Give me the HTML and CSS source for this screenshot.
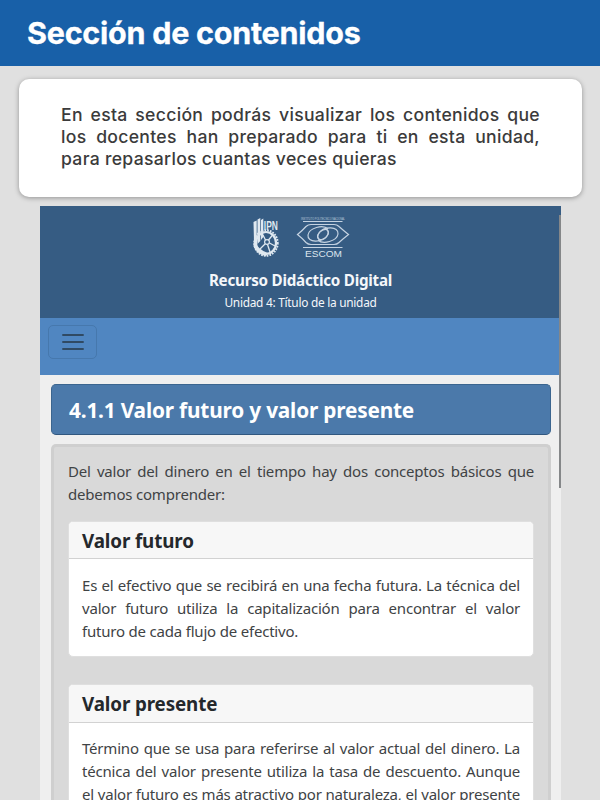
FILE: index.html
```html
<!DOCTYPE html>
<html lang="es">
<head>
<meta charset="utf-8">
<title>Sección de contenidos</title>
<link rel="stylesheet" href="styles.css">
</head>
<body>
<header class="topbar"><h1>Sección de contenidos</h1></header>
<section class="intro">
  <p class="lines"><span>En esta sección podrás visualizar los contenidos que</span> <span>los docentes han preparado para ti en esta unidad,</span> <span class="last">para repasarlos cuantas veces quieras</span></p>
</section>
<main class="resource">
  <header class="resource-head">
    <div class="logos">
      <svg class="ipn" width="28" height="42" viewBox="0 0 28 42">
        <g fill="none" stroke="#dfe8f0">
          <ellipse cx="14" cy="26" rx="11.800" ry="12.800" stroke-width="1.800" stroke-dasharray="1.700 1.100"/>
          <ellipse cx="14" cy="26" rx="10" ry="11" stroke-width="2.200"/>
          <circle cx="15" cy="25" r="2.400" stroke-width="1.200"/>
          <path d="M16.500 23L21 17.500M17.500 26L23 29M15.500 27.500L18 35M13 27L8 32M13.500 23L11 18" stroke-width="1.300"/>
        </g>
        <path d="M1.500 5L4.700 3.500V23L2 25ZM5.500 2.500L8.300 1V24L5.500 27ZM9 3L11.300 1.500V20L9 23Z" fill="#dfe8f0"/>
        <path d="M2 23Q6 33 16 36L14 39Q4 37 1.500 29Z" fill="#dfe8f0"/>
        <text x="11.800" y="12.500" class="ipn-text" textLength="14" lengthAdjust="spacingAndGlyphs">IPN</text>
      </svg>
      <svg class="escom" width="54" height="42" viewBox="0 0 54 42">
        <text x="5" y="3" class="institute" textLength="44" lengthAdjust="spacingAndGlyphs">INSTITUTO POLITECNICO NACIONAL</text>
        <g fill="none" stroke="#c5d3e2" stroke-width="1.200">
          <path d="M7 4.500H46.500M7 30.500H46.500"/>
          <path d="M1.500 17.500Q6 14 10 9.500Q12 7.500 15 7.500H38Q41 7.500 43 9.500Q48 14 52.500 17.500Q48 21 43 25.500Q41 27.500 38 27.500H15Q12 27.500 10 25.500Q6 21 1.500 17.500Z"/>
          <path d="M32 12C27 7 13 11 12 18C11 26 26 26 31 19C34 14 31 11 27 13C22 15 20 20 23 22"/>
          <path d="M22 23C27 28 41 24 42 17C43 9 28 9 23 16C20 21 23 24 27 22C32 20 34 15 31 13"/>
        </g>
        <text x="9" y="39.700" class="escom-text" textLength="37" lengthAdjust="spacingAndGlyphs">ESCOM</text>
      </svg>
    </div>
    <h2>Recurso Didáctico Digital</h2>
    <p>Unidad 4: Título de la unidad</p>
  </header>
  <nav class="resource-nav">
    <button class="menu" aria-label="Menú"><svg width="22" height="18" viewBox="0 0 22 18"><path d="M1 2H21M1 9H21M1 16H21" stroke="#304a63" stroke-width="1.900" stroke-linecap="round"/></svg></button>
  </nav>
  <div class="content">
    <h2 class="lesson"><span>4.1.1 Valor futuro y valor presente</span></h2>
    <section class="panel">
      <p class="lines copy"><span>Del valor del dinero en el tiempo hay dos conceptos básicos que</span> <span class="last">debemos comprender:</span></p>
      <article class="card">
        <h3>Valor futuro</h3>
        <p class="lines copy"><span>Es el efectivo que se recibirá en una fecha futura. La técnica del</span> <span>valor futuro utiliza la capitalización para encontrar el valor</span> <span class="last">futuro de cada flujo de efectivo.</span></p>
      </article>
      <article class="card">
        <h3>Valor presente</h3>
        <p class="lines copy"><span>Término que se usa para referirse al valor actual del dinero. La</span> <span>técnica del valor presente utiliza la tasa de descuento. Aunque</span> <span>el valor futuro es más atractivo por naturaleza, el valor presente</span></p>
      </article>
    </section>
  </div>
  <div class="scrollbar"></div>
</main>
</body>
</html>
```
FILE: styles.css
```css
* { box-sizing: border-box; }
body {
  margin: 0;
  height: 800px;
  overflow: hidden;
  background: #e0e0e0;
  font-family: "Noto Sans", sans-serif;
}
h1, h2, h3, p { margin: 0; }
.topbar {
  height: 66px;
  padding: 0 27px;
  display: flex;
  align-items: center;
  background: #1860a8;
}
.topbar h1 {
  font: 700 30.500px/40px Inter, sans-serif;
  letter-spacing: -.25px;
  color: #fff;
  -webkit-text-stroke: .3px #fff;
  white-space: nowrap;
}
.intro {
  width: 563px;
  height: 118px;
  margin: 13px 0 9px 19px;
  padding: 25px 42px;
  border-radius: 10px;
  background: #fff;
  box-shadow: 0 1px 5px rgba(0, 0, 0, .35);
}
.intro p {
  font: 500 17.600px/22px Inter, sans-serif;
  letter-spacing: .3px;
  color: #3b3b3b;
}
.lines span {
  display: block;
  white-space: nowrap;
  text-align: justify;
  text-align-last: justify;
}
.lines .last { text-align-last: left; }
.resource {
  position: relative;
  width: 521px;
  height: 594px;
  margin-left: 40px;
  background: #efefef;
  overflow: hidden;
}
.resource-head {
  height: 112px;
  padding-top: 11px;
  display: flex;
  flex-direction: column;
  align-items: center;
  background: #365c83;
  color: #f4f7fa;
}
.logos { display: flex; gap: 16px; height: 42px; margin-left: 1px; }
.logos svg { display: block; overflow: visible; }
.ipn-text { font: 700 12px "Liberation Sans", sans-serif; fill: #dfe8f0; }
.institute { font: 3.600px "Liberation Sans", sans-serif; fill: #b9cadb; }
.escom-text { font: 9.800px "Liberation Sans", sans-serif; fill: #dbe4ed; }
.resource-head h2 {
  margin-top: 10px;
  font-size: 15.200px;
  font-weight: 700;
  letter-spacing: -.24px;
  line-height: 23px;
  white-space: nowrap;
}
.resource-head p { margin-top: 1px; font-size: 11.900px; letter-spacing: -.28px; line-height: 18px; }
.resource-nav {
  height: 57px;
  margin-right: 1px;
  padding: 7px 8px;
  background: #5086c1;
}
.menu {
  display: flex;
  width: 49px;
  height: 34px;
  align-items: center;
  justify-content: center;
  padding: 0;
  border: 1px solid #4678ad;
  border-radius: 5px;
  background: transparent;
}
.content { padding: 9px 10px 0 11px; }
.lesson {
  height: 51px;
  padding-left: 17px;
  border: 1px solid #3b658f;
  border-bottom-color: #31577f;
  border-radius: 5px;
  background: #4b79aa;
  color: #fff;
  font-size: 20.800px;
  font-weight: 700;
  letter-spacing: -.18px;
  line-height: 50px;
  white-space: nowrap;
}
.panel {
  height: 356px;
  margin-top: 9px;
  padding: 13px 14px 0;
  border: 3px solid #cfcfcf;
  border-bottom: 0;
  border-radius: 5px 5px 0 0;
  background: #d9d9d9;
  overflow: hidden;
}
.copy { font-size: 15px; letter-spacing: -.2px; line-height: 23.300px; color: #404345; }
.card {
  width: 466px;
  height: 136px;
  margin-top: 13px;
  border: 1px solid #dfdfdf;
  border-radius: 5px;
  background: #fff;
  overflow: hidden;
}
.panel > .copy + .card { margin-top: 14px; }
.card + .card { height: 180px; margin-top: 27px; }
.card h3 {
  height: 37px;
  padding-left: 13px;
  border-bottom: 1px solid #d2d2d2;
  background: #f7f7f7;
  color: #24282c;
  font-size: 18.800px;
  font-weight: 700;
  letter-spacing: -.12px;
  line-height: 38px;
}
.card + .card h3 { height: 38px; line-height: 39px; }
.card p { padding: 15px 13px 0; }
.card + .card p { padding-top: 14px; }
.scrollbar {
  position: absolute;
  top: 9px;
  right: 0;
  width: 2px;
  height: 273px;
  background: #858789;
}
```
